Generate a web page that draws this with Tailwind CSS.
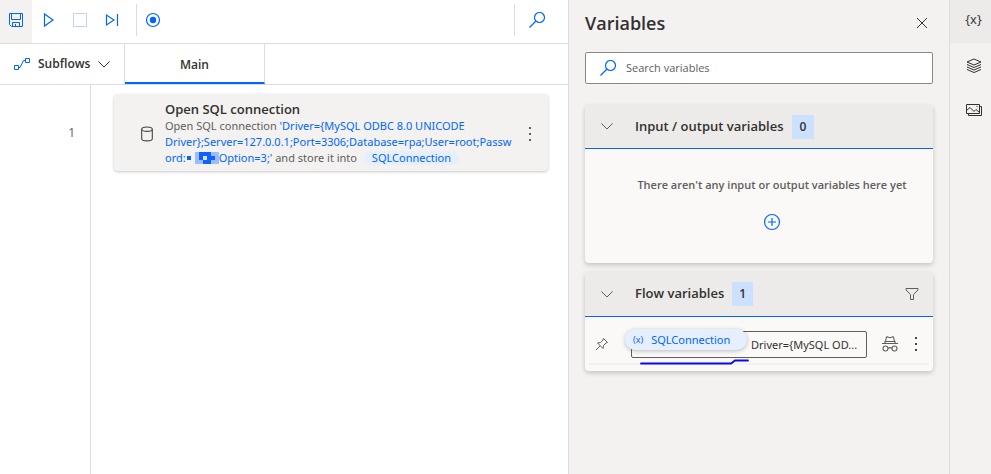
<!DOCTYPE html>
<html lang="en">
<head>
<meta charset="utf-8">
<meta name="viewport" content="width=device-width, initial-scale=1">
<title>Flow designer</title>
<script src="https://cdn.jsdelivr.net/npm/@tailwindcss/browser@4"></script>
</head>
<body class="flex min-h-screen bg-white font-['Open_Sans','Noto_Sans',sans-serif] text-[11px] text-[#323130]">

<main class="flex min-w-0 flex-1 flex-col">
  <header class="flex h-11 items-stretch border-b border-[#dcdcdc] text-[#0066ff]">
    <button aria-label="Save" class="flex w-8 items-center justify-center bg-[#f3f2f1] pb-1">
      <svg class="size-4" viewBox="0 0 16 16" fill="none" stroke="currentColor"><path d="M1.500 1.500h13v13h-11l-2-2zM3.500 1.500v6h9v-6M4.500 14.500v-4h7v4M7.500 12v2.500"/></svg>
    </button>
    <button aria-label="Run" class="flex w-8 items-center justify-center pb-1">
      <svg class="size-4" viewBox="0 0 16 16" fill="none" stroke="currentColor" stroke-width="1.200"><path d="M4.500 2v12l8.500-6z"/></svg>
    </button>
    <button aria-label="Stop" disabled class="flex w-8 items-center justify-center pb-1 text-[#b8d4ff]">
      <svg class="size-4" viewBox="0 0 16 16" fill="none" stroke="currentColor"><path d="M1.500 1.500h13v13h-13z"/></svg>
    </button>
    <button aria-label="Run next action" class="flex w-8 items-center justify-center pb-1">
      <svg class="size-4" viewBox="0 0 16 16" fill="none" stroke="currentColor" stroke-width="1.200"><path d="M2.500 3v10l7.500-5zM13.500 2v12"/></svg>
    </button>
    <div class="mx-2 mt-1 h-8 w-px bg-[#dcdcdc]"></div>
    <button aria-label="Record" class="flex w-4 items-center justify-center pb-1">
      <svg class="size-4" viewBox="0 0 16 16" fill="none" stroke="currentColor" stroke-width="1.200"><circle cx="8" cy="8" r="6.500"/><circle cx="8" cy="8" r="3.200" fill="currentColor" stroke="none"/></svg>
    </button>
    <div class="mt-1 ml-auto h-8 w-px bg-[#dcdcdc]"></div>
    <button aria-label="Search in flow" class="mr-[9px] flex w-11 items-center justify-center pb-1">
      <svg class="size-4" viewBox="0 0 16 16" fill="none" stroke="currentColor" stroke-width="1.200"><circle cx="10.500" cy="5.500" r="5"/><path d="M7 9l-6.500 6.500"/></svg>
    </button>
  </header>

  <nav class="flex h-[41px] items-stretch border-b border-[#dcdcdc] text-[12px] font-semibold">
    <button class="flex w-[125px] items-center border-r border-[#dcdcdc] pl-3.5">
      <svg class="size-4 text-[#0066ff]" viewBox="0 0 16 16" fill="none" stroke="currentColor"><path d="M.500 9.500h4v4h-4zM11.500 2.500h4v4h-4zM4.500 11.500h1.500l3.500-7h2"/></svg>
      <span class="ml-2">Subflows</span>
      <svg class="ml-2 h-3 w-3" viewBox="0 0 12 12" fill="none" stroke="currentColor"><path d="M.500 3.500l5.500 5.500 5.500-5.500"/></svg>
    </button>
    <button class="w-[140px] border-r border-b-2 border-r-[#dcdcdc] border-b-[#0066ff] pt-1">Main</button>
  </nav>

  <section class="flex flex-1">
    <div class="w-[91px] border-r border-[#dcdcdc] pt-10 pr-[15px] text-right text-[12px] leading-4 text-[#605e5c]">1</div>
    <div class="min-w-0 flex-1 pt-[9px] pr-5 pl-[23px]">
      <article class="flex items-center rounded-sm bg-[#f3f2f1] pt-[7px] pr-3 pb-[5px] pl-6 shadow-[0_1px_3px_rgba(0,0,0,0.220)]">
        <svg class="mr-[9px] size-[18px] shrink-0" viewBox="0 0 18 18" fill="none" stroke="#484644" stroke-width="1.100"><ellipse cx="9" cy="4.200" rx="5.300" ry="2.200"/><path d="M3.700 4.200v9.500c0 1.200 2.400 2.200 5.300 2.200s5.300-1 5.300-2.200V4.200"/></svg>
        <div class="min-w-0 flex-1 whitespace-nowrap">
          <h2 class="mb-px text-[13px] leading-4 font-semibold">Open SQL connection</h2>
          <p class="font-['Noto_Sans',sans-serif] leading-4 text-[#605e5c]">Open SQL connection <span class="text-[#0066ff]">'Driver={MySQL ODBC 8.0 UNICODE<br>Driver};Server=127.0.0.1;Port=3306;Database=rpa;User=root;Passw<br>ord:<svg class="ml-px inline-block h-3 w-8 align-[-2px]" viewBox="0 0 32 12" shape-rendering="crispEdges" role="img" aria-label="Hidden password"><path fill="#0f62fe" d="M0 4h4v4h-4zM12 0h8v4h-8zM12 4h4v4h-4zM16 8h8v4h-8zM20 0h4v8h-4zM24 4h4v4h-4z"/><path fill="#9abefc" d="M8 0h4v12h-4zM12 8h4v4h-4zM24 0h4v4h-4zM24 8h4v4h-4zM28 0h4v12h-4z"/><path fill="#d4e4ff" d="M16 4h4v4h-4z"/></svg>Option=3;'</span> and store it into <span class="ml-1 inline-block rounded-full bg-[#e5efff] px-2 leading-[14px] text-[#0066ff]">SQLConnection</span></p>
        </div>
        <button aria-label="More actions" class="shrink-0">
          <svg class="h-4 w-3" viewBox="0 0 12 16" fill="#605e5c"><path d="M5 1h2v2h-2zM5 7h2v2h-2zM5 13h2v2h-2z"/></svg>
        </button>
      </article>
    </div>
  </section>
</main>

<aside class="w-[382px] shrink-0 border-x border-[#dcdcdc] bg-[#f3f2f1] px-4">
  <div class="flex h-[52px] items-center justify-between pr-1 pb-1.5">
    <h1 class="text-[18px] font-semibold">Variables</h1>
    <button aria-label="Close">
      <svg class="size-3.5" viewBox="0 0 14 14" fill="none" stroke="currentColor"><path d="M2 2l10 10M12 2l-10 10"/></svg>
    </button>
  </div>
  <label class="flex h-8 items-center rounded-xs border border-[#8a8886] bg-white pl-3.5">
    <svg class="size-4 shrink-0 text-[#0066ff]" viewBox="0 0 16 16" fill="none" stroke="currentColor" stroke-width="1.200"><circle cx="10.500" cy="5.500" r="5"/><path d="M7 9l-6.500 6.500"/></svg>
    <input type="search" aria-label="Search variables" placeholder="Search variables" class="ml-2.5 min-w-0 flex-1 pt-px outline-none placeholder:text-[#605e5c]">
  </label>

  <section class="mt-[21px] overflow-hidden rounded bg-[#faf9f8] shadow-[0_2px_5px_rgba(0,0,0,0.200)]">
    <div class="flex h-11 items-center border-b border-[#0066ff] bg-[#edebe9] px-4">
      <button aria-label="Collapse input and output variables"><svg class="size-3" viewBox="0 0 12 12" fill="none" stroke="#605e5c"><path d="M.500 2.500l5.500 5.500 5.500-5.500"/></svg></button>
      <h2 class="ml-[22px] text-[13px] font-semibold">Input / output variables</h2>
      <span class="ml-2 bg-[#cce0ff] px-2 text-[12px] leading-6 font-semibold">0</span>
    </div>
    <div class="flex h-[114px] flex-col items-center pt-7 pl-[26px] text-[#605e5c]">
      <p class="leading-4 font-semibold">There aren't any input or output variables here yet</p>
      <button aria-label="Add variable" class="mt-5 text-[#0066ff]">
        <svg class="size-[18px]" viewBox="0 0 18 18" fill="none" stroke="currentColor" stroke-width="1.200"><circle cx="9" cy="9" r="7.500"/><path d="M9 5v8M5 9h8"/></svg>
      </button>
    </div>
  </section>

  <section class="mt-[9px] overflow-hidden rounded bg-[#faf9f8] pb-1.5 shadow-[0_2px_5px_rgba(0,0,0,0.200)]">
    <div class="flex h-[45px] items-center border-b border-[#0066ff] bg-[#edebe9] px-4">
      <button aria-label="Collapse flow variables"><svg class="size-3" viewBox="0 0 12 12" fill="none" stroke="#605e5c"><path d="M.500 3.500l5.500 5.500 5.500-5.500"/></svg></button>
      <h2 class="ml-[22px] text-[13px] font-semibold">Flow variables</h2>
      <span class="ml-2 bg-[#cce0ff] px-[7px] text-[12px] leading-6 font-semibold">1</span>
      <button aria-label="Filter" class="mr-[-2px] ml-auto"><svg class="size-3.5" viewBox="0 0 14 14" fill="none" stroke="#605e5c"><path d="M1 1.500h12v1.500l-4.500 4.500v5h-3v-5l-4.500-4.500z"/></svg></button>
    </div>
    <div class="relative mx-1 flex h-12 items-center border-b-2 border-[#f3f2f1] pt-2 pb-0">
      <button aria-label="Pin variable" class="ml-1.5"><svg class="size-3.5" viewBox="0 0 14 14" fill="none" stroke="#605e5c"><path d="M8.500 1.500l4 4-1.500.500-2.500 2.500-.500 3-5.500-5.500 3-.500 2.500-2.500zM5 9l-4 4"/></svg></button>
      <input type="text" readonly aria-label="SQLConnection value" value="Driver={MySQL OD..." class="ml-[22px] h-[27px] min-w-0 flex-1 rounded-xs border border-[#605e5c] bg-transparent pr-1 pl-[119px] font-['Noto_Sans',sans-serif] outline-none">
      <button aria-label="Mark as sensitive" class="ml-3.5"><svg class="size-[18px]" viewBox="0 0 18 18" fill="none" stroke="#605e5c" stroke-width="1.100"><path d="M1 8.500h16M4 8.500v-2h10v2M4.500 6.500l1-4.500c1.500-.500 2 .500 3.500.500s2-1 3.500-.500l1 4.500M7 13.500c1-1.200 3-1.200 4 0"/><circle cx="4.500" cy="13.500" r="2.500"/><circle cx="13.500" cy="13.500" r="2.500"/></svg></button>
      <button aria-label="More options" class="mr-[7px] ml-[11px]"><svg class="h-4 w-3" viewBox="0 0 12 16" fill="#484644"><path d="M5 1h2v2h-2zM5 7h2v2h-2zM5 13h2v2h-2z"/></svg></button>
      <button class="absolute top-3 left-9 flex h-[21px] w-[122px] items-center rounded-full bg-[#e5efff] pt-px pl-2 font-['Noto_Sans',sans-serif] text-[#0066ff] shadow-[0_1px_4px_rgba(0,0,0,0.250)]"><span class="text-[9px]">(x)</span><span class="ml-2">SQLConnection</span></button>
      <svg class="absolute top-[41px] left-[50px] h-2 w-28" viewBox="0 0 112 8" fill="none" stroke="#0808e8" stroke-width="1.800" stroke-linecap="round"><path d="M2 5.500h90l4-3h13"/></svg>
    </div>
  </section>
</aside>

<nav aria-label="Side panels" class="flex w-[41px] shrink-0 flex-col bg-[#f3f2f1]">
  <button aria-label="Variables" class="flex h-[43px] items-center justify-center bg-[#edebe9] pb-1 pl-1.5 text-[13px]">{x}</button>
  <button aria-label="UI elements" class="flex h-[45px] items-center justify-center pl-1.5"><svg class="size-4" viewBox="0 0 16 16" fill="none" stroke="currentColor"><path d="M8 1l7 3-7 3-7-3zM1 6.500l7 3 7-3M1 9l7 3 7-3M1 11.500l7 3 7-3"/></svg></button>
  <button aria-label="Images" class="flex h-[43px] items-center justify-center pl-1.5"><svg class="size-4" viewBox="0 0 16 16" fill="none" stroke="currentColor"><path d="M.500 2.500h13v9h-13zM13.500 4.500h2v9h-13v-2M.500 8.500l3.500-3 4 4 2-2 3.500 3"/><path d="M10.500 4.500h1"/></svg></button>
</nav>
</body>
</html>
